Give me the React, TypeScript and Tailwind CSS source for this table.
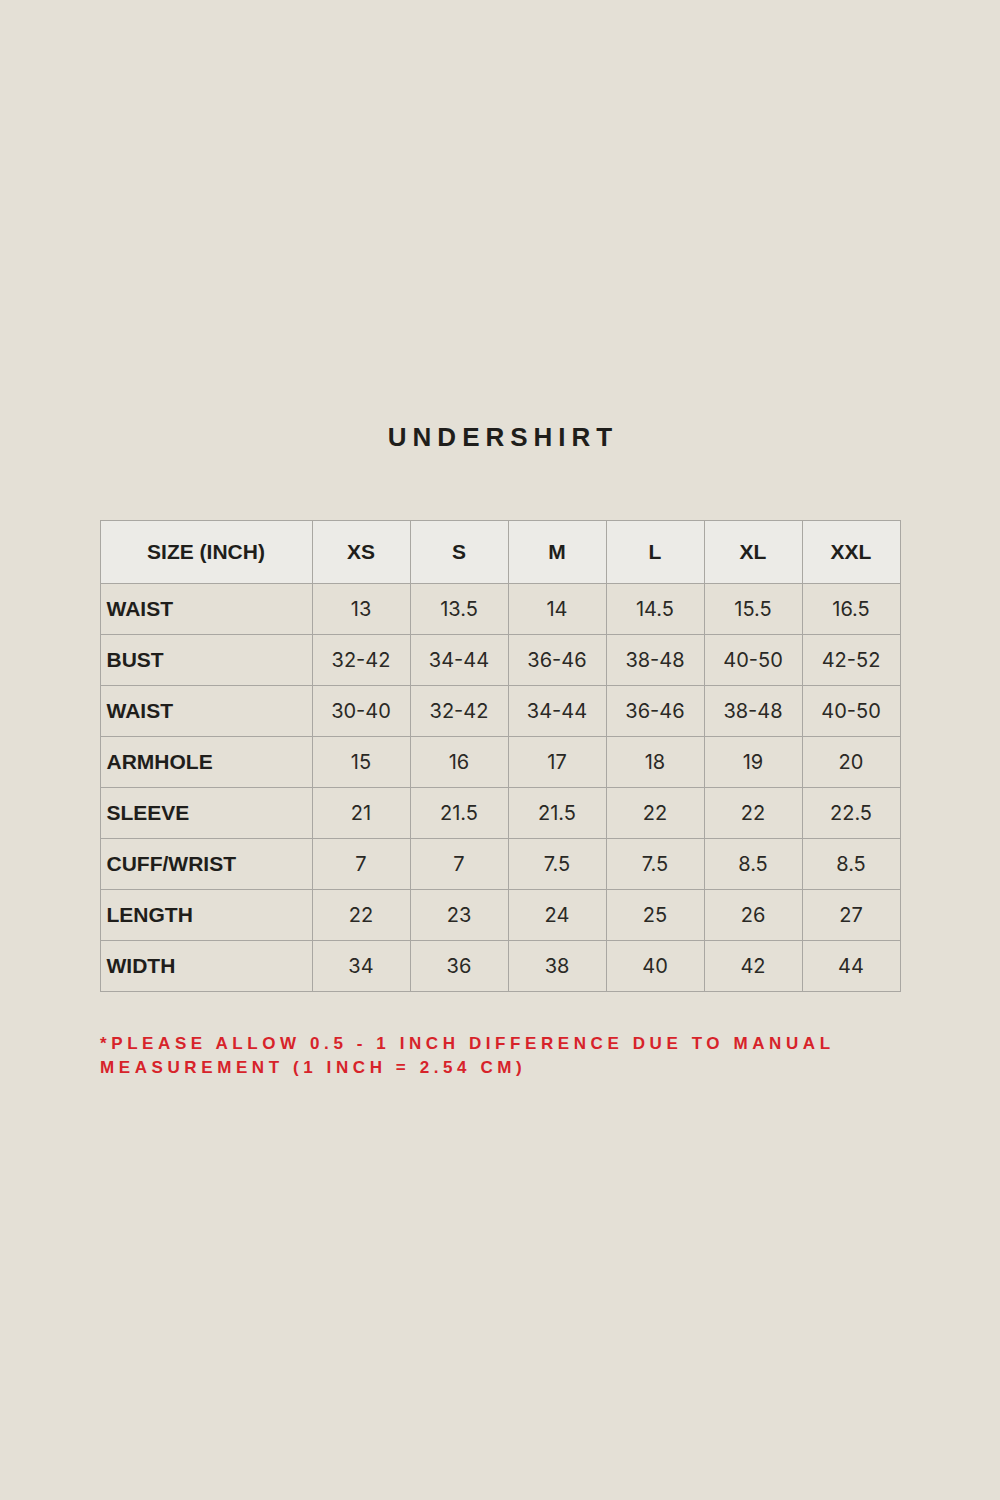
import React from "react"

const sizes = ["XS", "S", "M", "L", "XL", "XXL"]

const rows: { label: string; values: string[] }[] = [
  { label: "WAIST", values: ["13", "13.5", "14", "14.5", "15.5", "16.5"] },
  { label: "BUST", values: ["32-42", "34-44", "36-46", "38-48", "40-50", "42-52"] },
  { label: "WAIST", values: ["30-40", "32-42", "34-44", "36-46", "38-48", "40-50"] },
  { label: "ARMHOLE", values: ["15", "16", "17", "18", "19", "20"] },
  { label: "SLEEVE", values: ["21", "21.5", "21.5", "22", "22", "22.5"] },
  { label: "CUFF/WRIST", values: ["7", "7", "7.5", "7.5", "8.5", "8.5"] },
  { label: "LENGTH", values: ["22", "23", "24", "25", "26", "27"] },
  { label: "WIDTH", values: ["34", "36", "38", "40", "42", "44"] },
]

export default function App() {
  return (
    <div className="w-[1000px] h-[1500px] bg-[#e4e0d6] flex flex-col items-center">
      {/* Titulo */}
      <h1 className="mt-[420px] text-[26px] leading-[34px] font-bold tracking-[0.23em] pl-[0.23em] text-[#1f1e1b] font-['Liberation_Sans',sans-serif]">
        UNDERSHIRT
      </h1>

      <table className="mt-[66px] w-[800px] border-collapse border border-[#a9a7a2] table-fixed">
        <colgroup>
          <col className="w-[212px]" />
          {sizes.map((s) => (
            <col key={s} className="w-[98px]" />
          ))}
        </colgroup>
        <thead>
          <tr className="bg-[#ecebe7] h-[63px]">
            <th className="border border-[#a9a7a2] text-[21px] font-bold text-[#1f1e1b] font-['Liberation_Sans',sans-serif]">
              SIZE (INCH)
            </th>
            {sizes.map((s) => (
              <th
                key={s}
                className="border border-[#a9a7a2] text-[21px] font-bold text-[#1f1e1b] font-['Liberation_Sans',sans-serif]"
              >
                {s}
              </th>
            ))}
          </tr>
        </thead>
        <tbody>
          {rows.map((r, i) => (
            <tr key={i} className="h-[51px]">
              <td className="border border-[#a9a7a2] pl-[6px] text-left text-[21px] font-bold text-[#1f1e1b] font-['Liberation_Sans',sans-serif]">
                {r.label}
              </td>
              {r.values.map((v, j) => (
                <td
                  key={j}
                  className="border border-[#a9a7a2] text-center text-[20px] text-[#2a2925] font-['Inter',sans-serif]"
                >
                  {v}
                </td>
              ))}
            </tr>
          ))}
        </tbody>
      </table>

      {/* Nota */}
      <p className="mt-[40px] w-[800px] text-[17px] leading-[24px] font-bold tracking-[0.27em] text-[#d7232a] font-['Liberation_Sans',sans-serif]">
        *PLEASE ALLOW 0.5 - 1 INCH DIFFERENCE DUE TO MANUAL MEASUREMENT (1 INCH = 2.54 CM)
      </p>
    </div>
  )
}
